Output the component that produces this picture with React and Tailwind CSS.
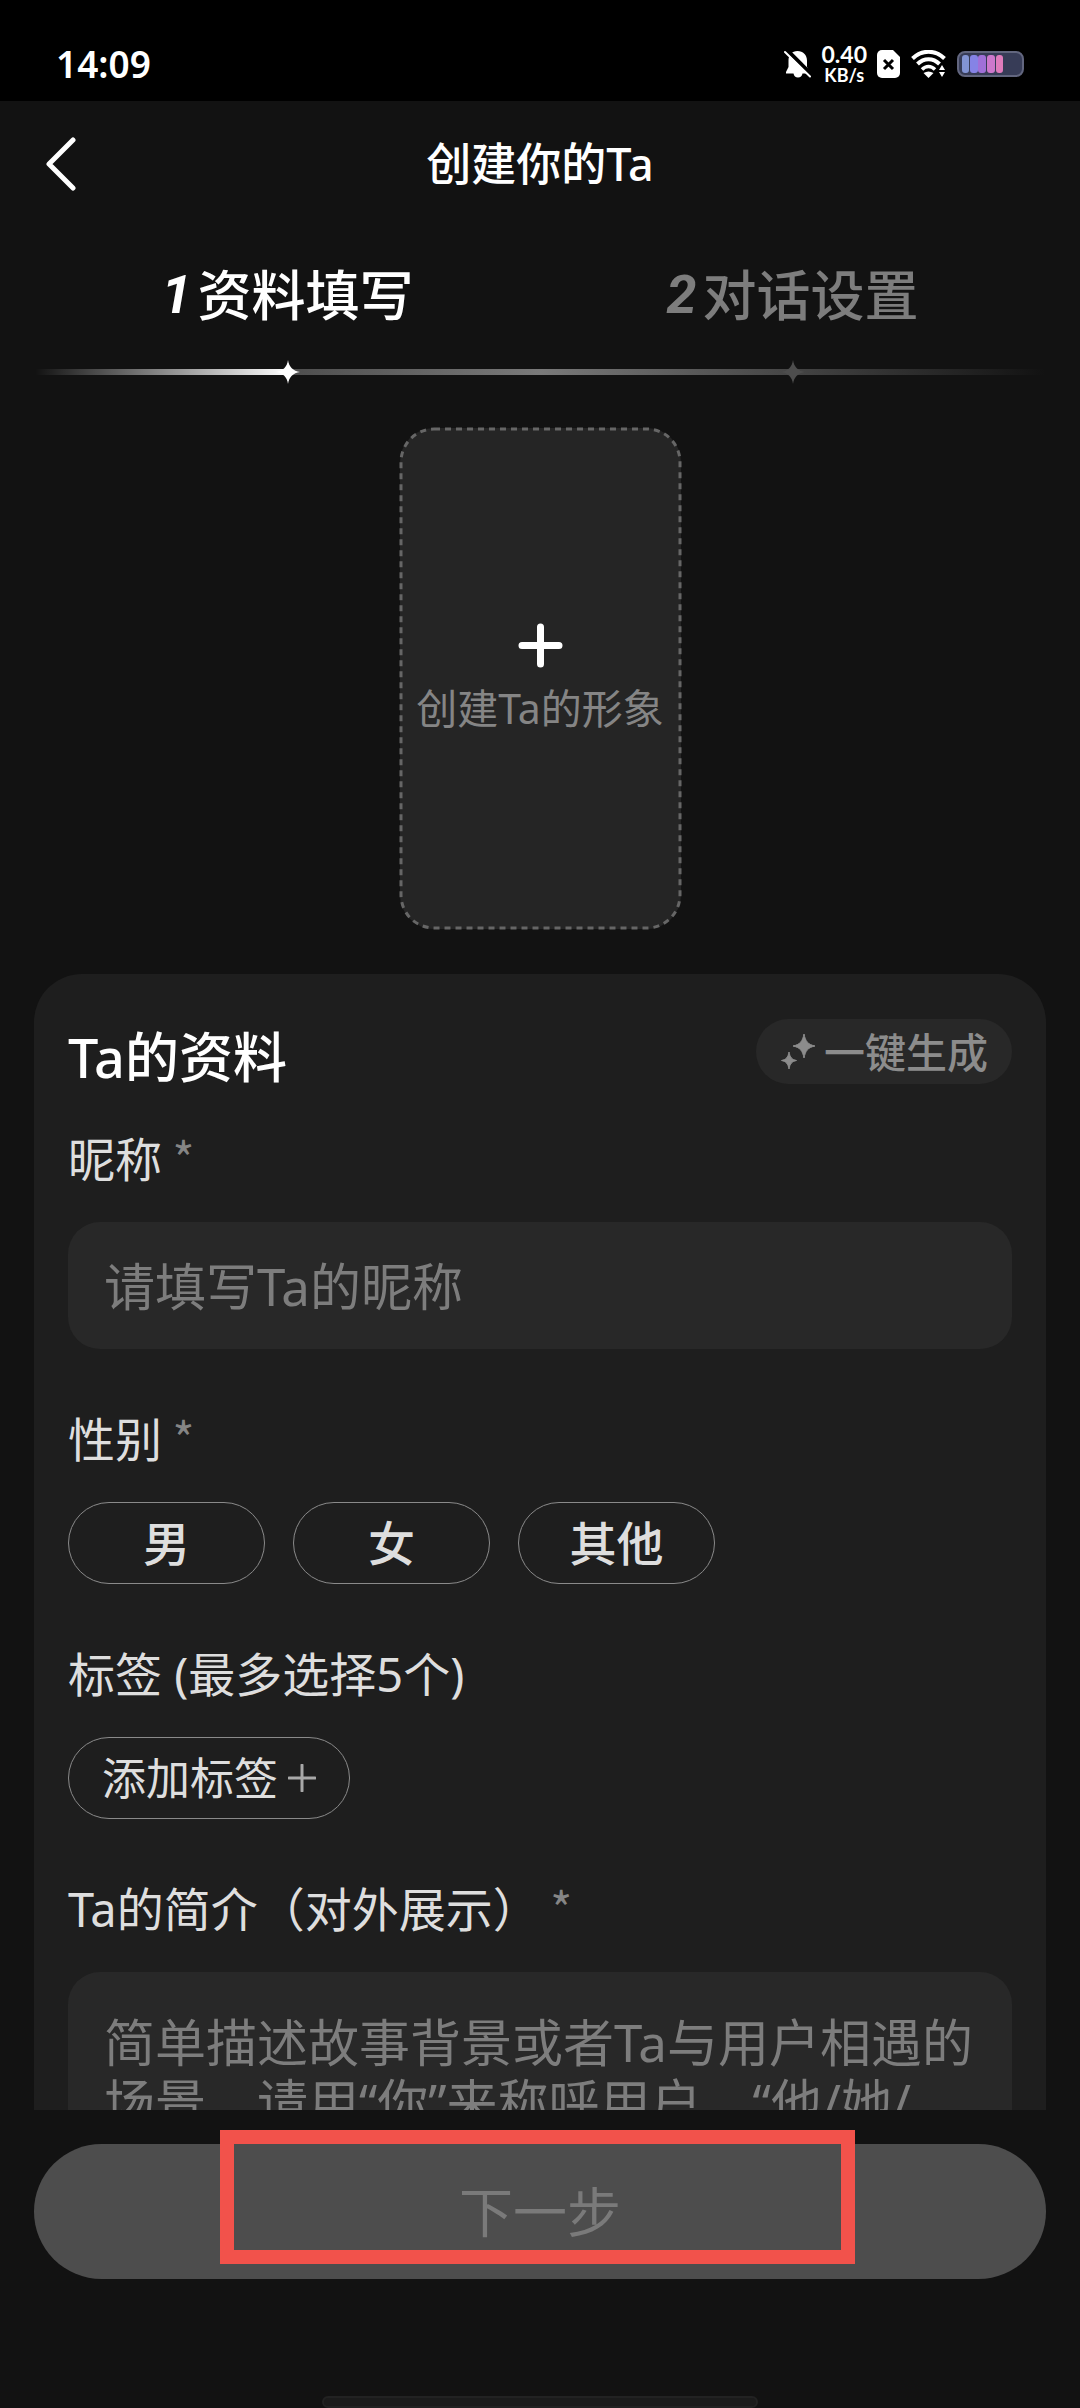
import { useState } from 'react'

const genders = ['男', '女', '其他']

function StatusBar() {
  return (
    <div className="h-[101px] shrink-0 bg-black flex items-center justify-between px-14 pt-[26px]">
      <span className="text-[37px] leading-[38px] font-semibold text-white">14:09</span>
      <div className="flex items-center gap-[10px] text-white">
        <svg className="w-7 h-7" viewBox="0 0 28 28" aria-hidden="true">
          <path d="M13.500 1 C19 1 23 5 23 10.500 V17 L26 22 V23.500 H18.500 C18 26 16.500 27.500 14 27.500 C11.500 27.500 10 26 9.500 23.500 H2 V22 L4.500 17 V10.500 C4.500 5 8 1 13.500 1 Z" fill="currentColor" />
          <path d="M3 0 L28 25" stroke="#000" strokeWidth="4" />
          <path d="M1 2 L26 26.500" stroke="currentColor" strokeWidth="2" strokeLinecap="round" />
        </svg>
        <div className="flex flex-col items-center font-['Lato',sans-serif] font-bold">
          <span className="text-[23px] leading-[22px]">0.40</span>
          <span className="text-[18px] leading-[20px]">KB/s</span>
        </div>
        <svg className="w-6 h-7" viewBox="0 0 24 28" aria-hidden="true">
          <path d="M5 0 H16 L23 7 V23 a5 5 0 0 1 -5 5 H5 a5 5 0 0 1 -5 -5 V5 a5 5 0 0 1 5 -5 Z" fill="currentColor" />
          <path d="M7 10 L16 19 M16 10 L7 19" stroke="#000" strokeWidth="3" />
        </svg>
        <svg className="w-9 h-7" viewBox="0 0 36 28" fill="none" stroke="currentColor" aria-hidden="true">
          <path d="M1.500 8.500 C11 -0.500 24 -0.500 33.500 8.500" strokeWidth="4" />
          <path d="M6.500 14 C13 7.500 22 7.500 28.500 14" strokeWidth="4" />
          <path d="M11 19.500 C15 15.500 20 15.500 24 19.500" strokeWidth="3.500" />
          <path d="M12.500 23 Q17.500 20 22.500 23 L17.500 28 Z" fill="currentColor" stroke="none" />
          <path d="M28 20 L31 15 L34 20 Z M28 22 L31 27 L34 22 Z" fill="currentColor" stroke="none" />
        </svg>
        <svg className="w-[67px] h-[26px]" viewBox="0 0 67 26" aria-hidden="true">
          <rect x="1" y="1" width="65" height="24" rx="7" fill="#373c57" stroke="#62667f" strokeWidth="2" />
          <rect x="5" y="4" width="7" height="18" rx="3" fill="#8294d4" />
          <rect x="13" y="4" width="8" height="18" rx="3" fill="#8583e6" />
          <rect x="21" y="4" width="8" height="18" rx="3" fill="#a070d8" />
          <rect x="30" y="4" width="8" height="18" rx="3" fill="#cd78cc" />
          <rect x="39" y="4" width="7" height="18" rx="3" fill="#df7cbc" />
        </svg>
      </div>
    </div>
  )
}

function Star({ className }) {
  return (
    <svg className={className} viewBox="0 0 24 24" fill="currentColor" aria-hidden="true">
      <path d="M12 0 C13 7 17 11 24 12 C17 13 13 17 12 24 C11 17 7 13 0 12 C7 11 11 7 12 0 Z" />
    </svg>
  )
}

function Label({ as: Tag = 'label', text, required, ...props }) {
  return (
    <Tag {...props} className="block text-[47px] leading-[60px] text-[#dedede]">
      {text}
      {required && <span className="leading-none text-[#858585] font-['Noto_Sans_CJK_SC',sans-serif]"> *</span>}
    </Tag>
  )
}

export default function App() {
  const [name, setName] = useState('')
  const [gender, setGender] = useState('')
  const [intro, setIntro] = useState('')

  return (
    <div className="h-screen flex flex-col overflow-hidden bg-[#121212] text-white font-['Noto_Sans','Noto_Sans_CJK_SC',sans-serif]">
      <StatusBar />

      <header className="grid grid-cols-[1fr_auto_1fr] items-center h-[126px] shrink-0 px-11">
        <button type="button" aria-label="返回" className="justify-self-start">
          <svg className="w-8 h-14" viewBox="0 0 32 56" fill="none" stroke="currentColor" strokeWidth="5" strokeLinecap="round" strokeLinejoin="round">
            <path d="M29 4 L5 28 L29 52" />
          </svg>
        </button>
        <h1 className="text-[45px] leading-[60px] font-medium">创建你的Ta</h1>
      </header>

      <nav className="shrink-0 px-[35px] pt-[33px]">
        <div className="grid grid-cols-2">
          <button type="button" className="flex items-center justify-center gap-[6px] text-[54px] leading-[70px] font-medium">
            <span className="font-['Roboto',sans-serif] italic font-bold">1</span>资料填写
          </button>
          <button type="button" className="flex items-center justify-center gap-[6px] text-[54px] leading-[70px] font-medium text-[#7d7d7d]">
            <span className="font-['Roboto',sans-serif] italic font-bold">2</span>对话设置
          </button>
        </div>
        <div className="flex items-center h-6 mt-[30px]">
          <div className="w-1/4 h-[6px] bg-linear-to-r from-transparent to-white" />
          <Star className="w-6 h-6 -mx-3 shrink-0 relative text-white" />
          <div className="w-1/4 h-[6px] bg-linear-to-r from-[#4e4e4e] to-[#7a7a7a]" />
          <div className="w-1/4 h-[6px] bg-linear-to-r from-[#7a7a7a] to-[#454545]" />
          <Star className="w-6 h-6 -mx-3 shrink-0 relative text-[#4d4d4d]" />
          <div className="w-1/4 h-[6px] bg-linear-to-r from-[#454545] to-transparent" />
        </div>
      </nav>

      <main className="flex-1 min-h-0 overflow-hidden flex flex-col items-center px-[34px] pt-11">
        <button type="button" className="relative w-[281px] h-[501px] shrink-0 rounded-[34px] bg-[#252525] flex flex-col items-center justify-center gap-[10px] pt-1">
          <svg className="absolute inset-px w-[calc(100%-2px)] h-[calc(100%-2px)] overflow-visible" fill="none" aria-hidden="true">
            <rect width="100%" height="100%" rx="33" stroke="#666666" strokeWidth="3" strokeDasharray="6 5" />
          </svg>
          <svg className="w-[45px] h-[45px]" viewBox="0 0 45 45" stroke="#fff" strokeWidth="7" strokeLinecap="round" aria-hidden="true">
            <path d="M22.500 4 V41 M4 22.500 H41" />
          </svg>
          <span className="text-[41px] leading-[60px] text-[#858585] whitespace-nowrap">创建Ta的形象</span>
        </button>

        <section className="w-full shrink-0 mt-[45px] rounded-[48px] bg-[#1e1e1e] px-[34px] pt-[45px] pb-10">
          <div className="flex items-start justify-between">
            <h2 className="text-[54px] leading-[76px] font-medium">Ta的资料</h2>
            <button type="button" className="h-[65px] px-6 rounded-full bg-[#282828] text-[#8c8c8c] text-[41px] leading-[60px] font-medium flex items-center gap-2">
              <svg className="w-9 h-9" viewBox="0 0 36 36" fill="currentColor" aria-hidden="true">
                <path d="M24 0 C25.500 7.500 28 10.500 35 12 C28 13.500 25.500 16.500 24 24 C22.500 16.500 20 13.500 13 12 C20 10.500 22.500 7.500 24 0 Z" stroke="currentColor" strokeWidth="1" strokeLinejoin="round" />
                <path d="M9 18 C10 23.500 12 25.500 16.500 26.500 C12 27.500 10 29.500 9 35 C8 29.500 6 27.500 1.500 26.500 C6 25.500 8 23.500 9 18 Z" stroke="currentColor" strokeWidth="1" strokeLinejoin="round" />
              </svg>
              一键生成
            </button>
          </div>

          <div className="mt-[34px]">
            <Label htmlFor="name" text="昵称" required />
            <input
              id="name"
              type="text"
              value={name}
              onChange={e => setName(e.target.value)}
              placeholder="请填写Ta的昵称"
              className="block w-full h-[127px] mt-[33px] px-9 rounded-[32px] bg-[#282828] text-[51px] leading-[60px] outline-none placeholder:text-[#7d7d7d]"
            />
          </div>

          <div className="mt-[60px]" role="group" aria-labelledby="gender-label">
            <Label as="p" id="gender-label" text="性别" required />
            <div className="flex gap-7 mt-[33px]">
              {genders.map(g => (
                <button
                  key={g}
                  type="button"
                  aria-pressed={gender === g}
                  onClick={() => setGender(g)}
                  className="w-[197px] h-[82px] rounded-full border border-[#8a8a8a] text-[47px] leading-[60px] font-medium text-[#dedede]"
                >
                  {g}
                </button>
              ))}
            </div>
          </div>

          <div className="mt-[60px]" role="group" aria-labelledby="tags-label">
            <Label as="p" id="tags-label" text="标签 (最多选择5个)" />
            <button type="button" className="h-[82px] mt-[33px] px-[33px] rounded-full border border-[#8a8a8a] flex items-center gap-[10px] text-[44px] leading-[60px] text-[#dedede]">
              添加标签
              <svg className="w-7 h-7" viewBox="0 0 28 28" stroke="#a8a8a8" strokeWidth="3" strokeLinecap="round" aria-hidden="true">
                <path d="M14 1 V27 M1 14 H27" />
              </svg>
            </button>
          </div>

          <div className="mt-[60px]">
            <Label htmlFor="intro" text="Ta的简介（对外展示）" required />
            <textarea
              id="intro"
              rows={4}
              value={intro}
              onChange={e => setIntro(e.target.value)}
              placeholder="简单描述故事背景或者Ta与用户相遇的场景，请用“你”来称呼用户，“他/她/"
              className="block w-full mt-[33px] pl-9 pr-8 py-10 rounded-[32px] bg-[#282828] text-[51px] leading-[60px] resize-none outline-none placeholder:text-[#7d7d7d]"
            />
          </div>
        </section>
      </main>

      <footer className="shrink-0 px-[34px] pt-[34px]">
        <div className="relative">
          <button type="button" disabled className="w-full h-[135px] rounded-full bg-[#4d4d4d] text-[54px] leading-[70px] text-[#7a7a7a]">
            下一步
          </button>
          <div className="absolute left-[186px] right-[191px] -top-[14px] h-[134px] border-14 border-[#f2524b] pointer-events-none" />
        </div>
        <div className="w-[436px] h-3 mx-auto mt-[117px] rounded-full bg-[#1b1b1b] border-2 border-[#222222]" />
      </footer>
    </div>
  )
}
